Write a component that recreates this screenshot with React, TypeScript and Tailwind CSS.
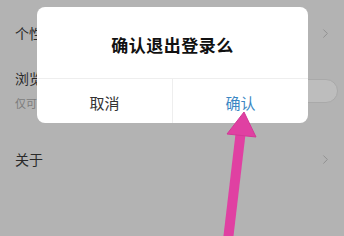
import { ChevronRight } from "lucide-react";

const font = { fontFamily: '"Noto Sans CJK SC", "Noto Sans", sans-serif' };

function Chevron() {
  return <ChevronRight size={15} strokeWidth={1.5} className="text-[#8e8e8e] -mr-[4px]" />;
}

export default function App() {
  return (
    <div className="relative w-[344px] h-[236px] overflow-hidden bg-[#b3b3b3]" style={font}>
      {/* settings list behind the dim layer */}
      <div className="flex flex-col px-[15px]">
        <div className="flex items-center justify-between pt-[24px] pb-[12px]">
          <span className="text-[14px] leading-[18px] text-[#2a2a2a]">个性化推荐</span>
          <Chevron />
        </div>
        <div className="flex items-center justify-between pt-[15px] pb-[10px]">
          <div className="flex flex-col">
            <span className="text-[14px] leading-[18px] text-[#2a2a2a]">浏览记录</span>
            <span className="mt-[9px] text-[11px] leading-[15px] text-[#7c7c7c]">仅可查看</span>
          </div>
          <div className="w-[44px] h-[24px] -mr-[9px] mt-[2px] rounded-full bg-[#bdbdbd] border border-[#a9a9a9]" />
        </div>
        <div className="flex items-center justify-between pt-[29px]">
          <span className="text-[14px] leading-[18px] text-[#2a2a2a]">关于</span>
          <Chevron />
        </div>
      </div>

      {/* logout confirm dialog */}
      <div className="absolute left-[37px] top-[7px] w-[271px] h-[116px] rounded-[8px] bg-white flex flex-col overflow-hidden">
        <div className="h-[72px] flex items-center justify-center pt-[4px] border-b border-[#eeeeee]">
          <span className="text-[17px] font-bold text-[#111111] tracking-[0.5px]">确认退出登录么</span>
        </div>
        <div className="flex flex-1">
          <div className="flex-1 flex items-center justify-center pt-[4px] border-r border-[#eeeeee]">
            <span className="text-[15px] text-[#333333]">取消</span>
          </div>
          <div className="flex-1 flex items-center justify-center pt-[4px]">
            <span className="text-[15px] text-[#3b87c4]">确认</span>
          </div>
        </div>
      </div>

      {/* annotation arrow */}
      <svg className="absolute inset-0" width="344" height="236" viewBox="0 0 344 236">
        <line x1="228" y1="240" x2="241" y2="130" stroke="#e040a2" strokeWidth="10" />
        <polygon points="244,112 227,134 256,137" fill="#e040a2" stroke="#d23996" strokeWidth="1" strokeLinejoin="round" />
      </svg>
    </div>
  );
}
